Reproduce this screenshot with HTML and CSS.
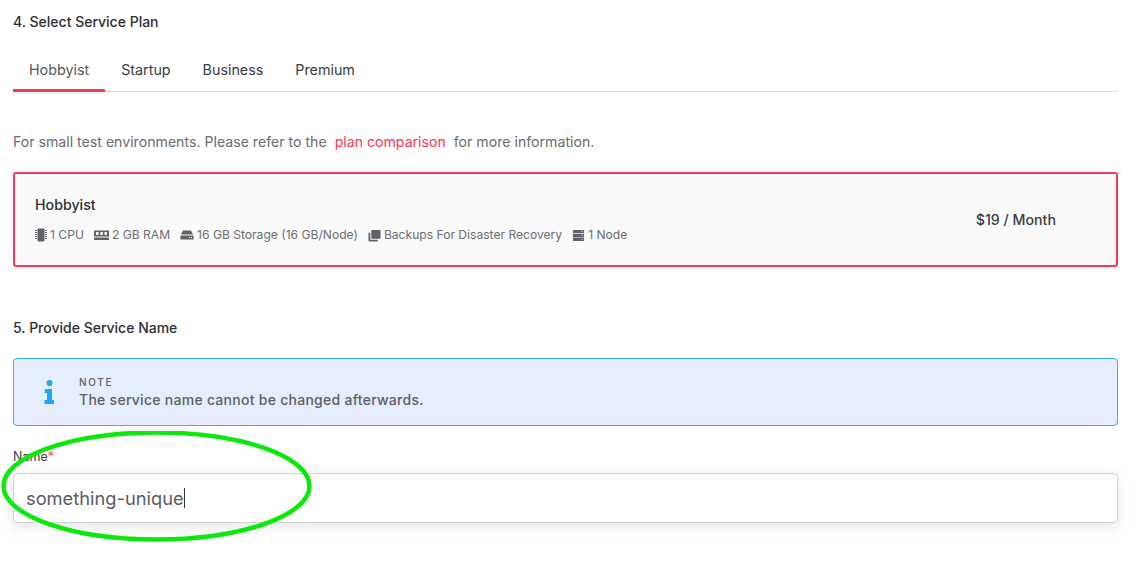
FILE: index.html
```html
<!DOCTYPE html>
<html lang="en">
<head>
    <meta charset="UTF-8">
    <title>Create service</title>
    <link rel="stylesheet" href="styles.css">
</head>
<body>
    <section class="step step_plan">
        <h2 class="step__title">4. Select Service Plan</h2>
        <div class="tabs">
            <div class="tab tab_active">Hobbyist</div>
            <div class="tab">Startup</div>
            <div class="tab">Business</div>
            <div class="tab">Premium</div>
        </div>
        <p class="plan-desc">For small test environments. Please refer to the <a class="plan-desc__link" href="#">plan comparison</a> for more information.</p>
        <div class="plan">
            <div class="plan__info">
                <div class="plan__name">Hobbyist</div>
                <div class="specs">
                    <span class="spec">
                        <svg class="spec__icon spec__icon_cpu" viewBox="0 0 12 14"><rect x="2.500" y="0.500" width="7" height="13" rx="1"/><path d="M0 2h2v1h-2zM0 4h2v1h-2zM0 6h2v1h-2zM0 8h2v1h-2zM0 10h2v1h-2zM10 2h2v1h-2zM10 4h2v1h-2zM10 6h2v1h-2zM10 8h2v1h-2zM10 10h2v1h-2z"/></svg>
                        1 CPU
                    </span>
                    <span class="spec">
                        <svg class="spec__icon spec__icon_ram" viewBox="0 0 15 14"><path fill-rule="evenodd" d="M0 2.500h15v6h-15zM2 4v3h2.500v-3zM6.300 4v3h2.500v-3zM10.500 4v3h2.500v-3z"/><path d="M0 9.500h15v2.500h-15z"/></svg>
                        2 GB RAM
                    </span>
                    <span class="spec">
                        <svg class="spec__icon" viewBox="0 0 14 14"><path d="M3 2.500h8l2 4h-12z"/><path fill-rule="evenodd" d="M0.500 7.500h13v4h-13zM9 9v1h1v-1zM11 9v1h1v-1z"/></svg>
                        16 GB Storage (16 GB/Node)
                    </span>
                    <span class="spec">
                        <svg class="spec__icon spec__icon_small" viewBox="0 0 14 14"><rect x="3.500" y="1" width="10" height="9.500" rx="1"/><path d="M0.500 4h2v7.500h8v2h-9a1 1 0 0 1-1-1z"/></svg>
                        Backups For Disaster Recovery
                    </span>
                    <span class="spec">
                        <svg class="spec__icon spec__icon_small" viewBox="0 0 14 14"><path fill-rule="evenodd" d="M1 1h12v3.500h-12zM10.500 2.200v1h1v-1zM1 5.250h12v3.500h-12zM10.500 6.500v1h1v-1zM1 9.500h12v3.500h-12zM10.500 10.700v1h1v-1z"/></svg>
                        1 Node
                    </span>
                </div>
            </div>
            <div class="plan__price">$19 / Month</div>
        </div>
    </section>

    <section class="step step_name">
        <h2 class="step__title">5. Provide Service Name</h2>
        <div class="note">
            <svg class="note__icon" viewBox="0 0 10 24"><circle cx="5" cy="3" r="3"/><path d="M0.500 9h7v11h2v4h-9.500v-4h2.500v-7h-2.500z"/></svg>
            <div>
                <div class="note__label">NOTE</div>
                <div class="note__text">The service name cannot be changed afterwards.</div>
            </div>
        </div>
        <label class="field-label">Name<span class="field-label__star">*</span></label>
        <div class="field">something-unique<span class="field__caret"></span></div>
    </section>

    <svg class="marker" viewBox="0 0 320 120"><ellipse cx="156.500" cy="55" rx="153" ry="53.500"/></svg>
</body>
</html>
```
FILE: styles.css
```css
* {
    box-sizing: border-box;
}
html,
body {
    height: 562px;
    overflow: hidden;
}
body {
    margin: 0;
    padding: 0 25px 0 13px;
    position: relative;
    background-color: #fff;
    font-family: "Inter", "Liberation Sans", sans-serif;
    color: #2d2f33;
}
.step__title {
    margin: 0;
    font-size: 14px;
    line-height: 20px;
    font-weight: 500;
}
.step_plan {
    padding-top: 12px;
}
.step_name {
    padding-top: 51px;
}
.tabs {
    display: flex;
    margin-top: 15px;
    border-bottom: 1px solid #dcdde0;
}
.tab {
    padding: 13px 16px 9px;
    font-size: 14.300px;
    line-height: 20px;
    color: #3a3d42;
    margin-bottom: -1px;
    border-bottom: 3px solid transparent;
}
.tab_active {
    color: #55585d;
    border-bottom-color: #ff3554;
}
.plan-desc {
    margin: 40px 0 0;
    font-size: 14.130px;
    line-height: 20px;
    color: #6a6d72;
}
.plan-desc__link {
    margin: 0 4px;
    color: #ff3554;
    text-decoration: none;
}
.plan {
    display: flex;
    align-items: center;
    justify-content: space-between;
    height: 95px;
    margin-top: 20px;
    padding: 0 60px 0 20px;
    background-color: #fafafa;
    border: 2px solid #ff3554;
    border-radius: 3px;
}
.plan__name {
    font-size: 14.200px;
    line-height: 20px;
    font-weight: 500;
}
.plan__price {
    font-size: 14.200px;
    line-height: 20px;
    font-weight: 500;
    color: #3a3d42;
}
.specs {
    display: flex;
    gap: 10px;
    margin-top: 11px;
}
.spec {
    display: flex;
    align-items: center;
    gap: 3px;
    font-size: 12.100px;
    line-height: 18px;
    color: #6a6d72;
}
.spec__icon {
    width: 14px;
    height: 14px;
    fill: #5f6267;
}
.spec__icon_cpu {
    width: 12px;
}
.spec__icon_ram {
    width: 15px;
}
.spec__icon_small {
    width: 13px;
    height: 13px;
}
.note {
    display: flex;
    align-items: center;
    gap: 24px;
    height: 68px;
    margin-top: 20px;
    padding-left: 30px;
    background-color: #e6edfc;
    border: 1px solid #2db5f5;
    border-radius: 4px;
}
.note__icon {
    width: 11px;
    height: 24px;
    fill: #1ba8f5;
}
.note__label {
    font-size: 10px;
    line-height: 15px;
    font-weight: 500;
    letter-spacing: 1.700px;
    color: #5d6066;
}
.note__text {
    font-size: 14px;
    line-height: 20px;
    font-weight: 500;
    letter-spacing: 0.270px;
    color: #5d6066;
}
.field-label {
    display: block;
    margin-top: 23px;
    font-size: 12.500px;
    line-height: 16px;
    color: #3a3d42;
}
.field-label__star {
    color: #ff4d4d;
}
.field {
    display: flex;
    align-items: center;
    height: 50px;
    margin-top: 8px;
    padding-left: 12px;
    font-size: 18.300px;
    color: #595c61;
    background-color: #fff;
    border: 1px solid #cfd1d4;
    border-radius: 4px;
    box-shadow: 0 4px 14px rgba(0, 0, 0, 0.1);
}
.field__caret {
    width: 1px;
    height: 20px;
    background-color: #33363a;
}
/* hand-drawn highlight lying over the form */
.marker {
    position: absolute;
    left: 0;
    top: 431px;
    width: 320px;
    height: 120px;
    fill: none;
    stroke: #0be80b;
    stroke-width: 4.500;
}
```
